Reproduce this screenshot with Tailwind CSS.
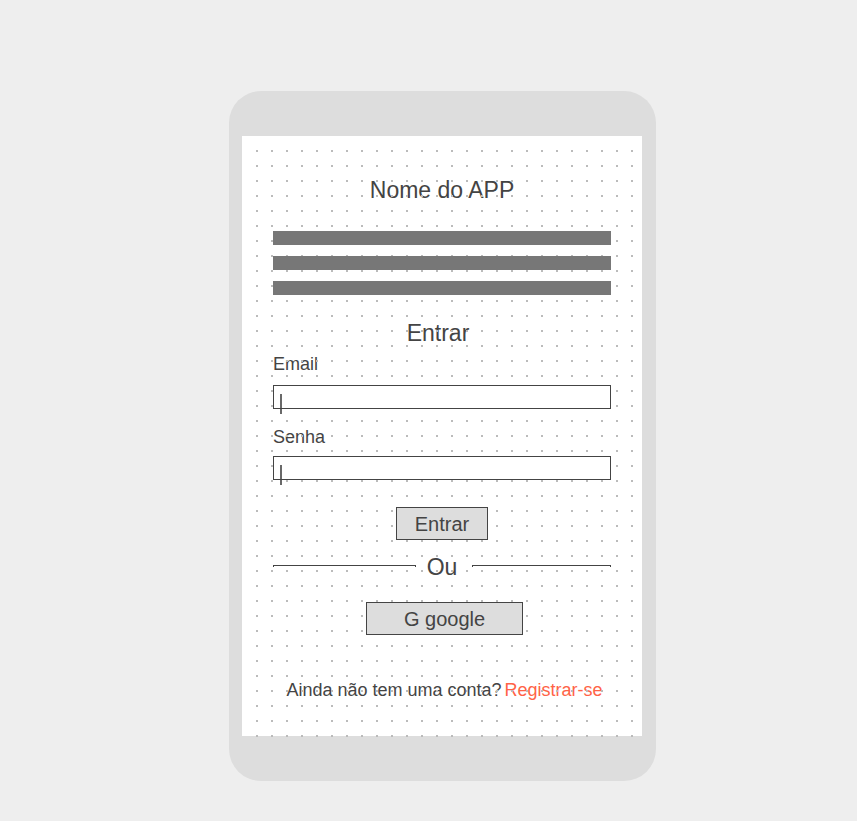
<!DOCTYPE html>
<html lang="pt-BR">
<head>
<meta charset="utf-8">
<meta name="viewport" content="width=device-width, initial-scale=1">
<title>Nome do APP</title>
<script src="https://cdn.jsdelivr.net/npm/@tailwindcss/browser@4"></script>
</head>
<body class="min-h-screen bg-[#eeeeee] pt-[91px] pb-10 pl-7 font-['Liberation_Sans',Arial,sans-serif] text-[#444444]">
  <div class="mx-auto w-full max-w-[427px] rounded-[32px] bg-[#dddddd] py-[45px] pr-[14px] pl-[13px]">
    <main class="relative bg-white px-[31px] pt-10 pb-8">
      <h1 class="text-center text-[23px] leading-7">Nome do APP</h1>
      <div class="relative z-20 mt-[27px] flex flex-col gap-[11px]" aria-hidden="true">
        <div class="h-[14px] bg-[#777777]"></div>
        <div class="h-[14px] bg-[#777777]"></div>
        <div class="h-[14px] bg-[#777777]"></div>
      </div>

      <form class="mt-6 flex flex-col">
        <h2 class="pr-2 text-center text-[23px] leading-7">Entrar</h2>
        <label for="email" class="mt-[3px] text-[18px] leading-7">Email</label>
        <div class="relative z-20 mt-[7px]">
          <input id="email" type="email" class="block h-6 w-full border border-[#444444] bg-white px-2 text-[18px] outline-none">
          <span class="absolute top-[9px] left-[7px] h-5 w-[2px] bg-[#444444]/80" aria-hidden="true"></span>
        </div>
        <label for="senha" class="mt-[14px] text-[18px] leading-7">Senha</label>
        <div class="relative z-20 mt-[5px]">
          <input id="senha" type="password" class="block h-6 w-full border border-[#444444] bg-white px-2 text-[18px] outline-none">
          <span class="absolute top-[9px] left-[7px] h-5 w-[2px] bg-[#444444]/80" aria-hidden="true"></span>
        </div>
        <button type="submit" class="relative z-20 mt-[27px] h-[33px] w-[92px] self-center border border-[#444444] bg-[#dddddd] text-[20px] leading-7">Entrar</button>
      </form>

      <div class="mt-[13px] grid h-7 grid-cols-[143fr_56px_139fr] items-center">
        <div class="mb-[2px] h-[2px] border border-b-0 border-[#444444]"></div>
        <span class="pr-1 text-center text-[23px] leading-7">Ou</span>
        <div class="mb-[2px] h-[2px] border border-b-0 border-[#444444]"></div>
      </div>

      <div class="mt-[21px] flex justify-center pl-[5px]">
        <button type="button" class="relative z-20 h-[33px] w-[157px] border border-[#444444] bg-[#dddddd] text-[20px] leading-7">G google</button>
      </div>

      <p class="mt-[41px] flex justify-center gap-[3px] pl-[5px] text-[18px] leading-7 whitespace-nowrap">
        <span>Ainda não tem uma conta?</span>
        <a href="#" class="text-[#ff6347]">Registrar-se</a>
      </p>

      <!-- Dot grid drawn over the text and under the boxes -->
      <svg class="pointer-events-none absolute top-[14px] left-[14px] z-10 h-[calc(100%-13px)] w-[calc(100%-14px)]" aria-hidden="true">
        <defs>
          <pattern id="dots" width="15" height="15" patternUnits="userSpaceOnUse">
            <rect width="2" height="2" fill="#bbbbbb"/>
          </pattern>
        </defs>
        <rect width="100%" height="100%" fill="url(#dots)"/>
      </svg>
    </main>
  </div>
</body>
</html>
